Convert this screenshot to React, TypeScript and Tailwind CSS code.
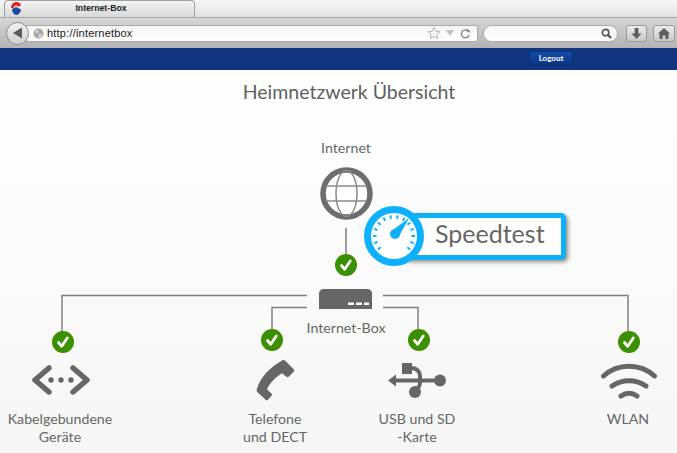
import React from 'react';

const font = { fontFamily: 'Lato, "Open Sans", sans-serif' };

const gaugeTicks = [-130, -110, -90, -70, -50, -30, -10, 10, 30, 50, 70, 90, 110, 130];

const Check = ({ className }: { className: string }) => (
  <svg className={`absolute ${className}`} width="24" height="24" viewBox="0 0 24 24">
    <circle cx="12" cy="12" r="11" fill="#3b9000" />
    <path d="M7.500 12.500l3.200 3.800L16.300 8" fill="none" stroke="#fff" strokeWidth="2.800" strokeLinecap="round" strokeLinejoin="round" />
  </svg>
);

const Label = ({ className, children }: { className: string; children: React.ReactNode }) => (
  <div className={`absolute text-center text-[14.2px] leading-[18px] text-[#666] ${className}`}>{children}</div>
);

const App = () => {
  return (
    <div className="w-[677px] h-[453px] flex flex-col overflow-hidden bg-white" style={font}>
      {/* browser tab strip */}
      <div className="h-[18px] flex items-end pl-[4px] bg-gradient-to-b from-[#f6f6f6] to-[#e2e2e2] border-b border-[#a8a8a8]">
        <div className="relative w-[191px] h-[17px] flex items-center justify-center rounded-t-[4px] border border-b-0 border-[#a0a0a0] bg-gradient-to-b from-[#f4f4f4] to-[#d9d9d9]">
          <svg className="absolute left-[4px] top-[1px]" width="14" height="14" viewBox="0 0 14 14">
            <path d="M2 6C2 2 5 0 7.500 0c2 0 4 1 4.500 3L9.500 5C8 3 5 3 4.500 6z" fill="#e2231a" />
            <path d="M3 7l4-2 5 2.500c0 3-3 5.500-4.500 5.500C5 13 3 10 3 7z" fill="#1c4ba0" />
          </svg>
          <span className="pl-[3px] text-[8.7px] font-bold text-[#222] font-['Liberation_Sans',sans-serif]">Internet-Box</span>
        </div>
      </div>

      {/* browser toolbar */}
      <div className="h-[30px] flex items-center pl-[6px] pr-[2px] bg-gradient-to-b from-[#d6d6d6] to-[#b3b3b3]">
        <div className="relative z-10 w-[23px] h-[23px] rounded-full border border-[#8f8f8f] bg-gradient-to-b from-[#f2f2f2] to-[#cfcfcf] flex items-center justify-center">
          <svg width="11" height="12" viewBox="0 0 11 12"><path d="M1 6l9-5.500v11z" fill="#5c5c5c" /></svg>
        </div>
        <div className="-ml-[3px] w-[452px] h-[17px] flex items-center bg-gradient-to-b from-[#f4f4f4] to-white border border-[#a9a9a9] rounded-r-[2px] pl-[6px] pr-[6px]">
          <svg width="11" height="11" viewBox="0 0 12 12">
            <circle cx="6" cy="6" r="5.500" fill="#a9a9a9" />
            <path d="M3 3c2-1 3 0 3 1S4 6 3 5zM7 6c2 0 3 1 2 3s-3 1-3 0z" fill="#dcdcdc" />
          </svg>
          <span className="ml-[3px] text-[11px] text-[#222] font-['Liberation_Sans',sans-serif] tracking-[0.2px]">http://internetbox</span>
          <div className="flex-1" />
          <svg width="14" height="14" viewBox="0 0 24 24" fill="#f6f6f6" stroke="#b4b4b4" strokeWidth="1.600">
            <path d="M12 2l3 7 7.500.6-5.700 4.900 1.800 7.400L12 18l-6.600 3.900 1.800-7.400L1.500 9.600 9 9z" />
          </svg>
          <svg className="ml-[5px]" width="8" height="6" viewBox="0 0 8 6"><path d="M0 0h8L4 6z" fill="#c2c2c2" /></svg>
          <svg className="ml-[6px]" width="11" height="11" viewBox="0 0 12 12" fill="none" stroke="#7a7a7a" strokeWidth="1.300">
            <path d="M10 7.500A4.300 4.300 0 1 1 8.500 3" />
            <path d="M8 0.500v4h3.500z" fill="#7a7a7a" stroke="none" />
          </svg>
        </div>
        <div className="ml-[5px] w-[135px] h-[17px] rounded-full flex items-center justify-end pr-[5px] bg-gradient-to-b from-[#f4f4f4] to-white border border-[#a9a9a9]">
          <svg width="11" height="11" viewBox="0 0 12 12" fill="none" stroke="#555" strokeWidth="1.800">
            <circle cx="5" cy="5" r="3.500" />
            <path d="M7.500 7.500L11 11" strokeWidth="2.400" />
          </svg>
        </div>
        <div className="ml-[8px] w-[21px] h-[17px] rounded-[3px] border border-[#9a9a9a] bg-gradient-to-b from-[#ececec] to-[#c8c8c8] flex items-center justify-center">
          <svg width="11" height="11" viewBox="0 0 12 12"><path d="M4 0h4v6h3.500L6 12 0.500 6H4z" fill="#5e5e5e" /></svg>
        </div>
        <div className="ml-[6px] w-[22px] h-[17px] rounded-[3px] border border-[#9a9a9a] bg-gradient-to-b from-[#ececec] to-[#c8c8c8] flex items-center justify-center">
          <svg width="12" height="11" viewBox="0 0 12 11"><path d="M6 0l6 5.500h-1.500V11H7.500V7.500h-3V11H1.500V5.500H0z" fill="#5e5e5e" /></svg>
        </div>
      </div>

      {/* site header */}
      <div className="h-[22px] flex items-start justify-end pt-[3px] pr-[104px] bg-[#11357f]">
        <button className="w-[44px] h-[15px] rounded-[1px] border border-[#0d2f72] bg-gradient-to-b from-[#0f4ea8] to-[#0b3480] text-[8px] font-bold text-white leading-[13px]">Logout</button>
      </div>

      {/* home network diagram */}
      <div className="relative flex-1 bg-gradient-to-b from-white to-[#f6f6f6]">
        <h1 className="pt-[10px] pl-[21px] text-center text-[19.5px] leading-[24px] text-[#5f5f5f]">Heimnetzwerk Übersicht</h1>

        <svg className="absolute left-0 top-0" width="677" height="383" fill="none" stroke="#808080" strokeWidth="1.500">
          <path d="M346 158v32" />
          <path d="M307 225.500H62V267" />
          <path d="M307 237.500H272V267" />
          <path d="M383 225.500H628V267" />
          <path d="M383 237.500H418V267" />
        </svg>

        <Label className="left-[296px] top-[69px] w-[100px]">Internet</Label>

        <svg className="absolute left-[320px] top-[97px]" width="53" height="53" viewBox="0 0 53 53" fill="none" stroke="#8a8a8a" strokeWidth="1.500">
          <circle cx="26.500" cy="26.500" r="23.500" fill="#fff" stroke="#6d6d6d" strokeWidth="5.500" />
          <ellipse cx="26.500" cy="26.500" rx="10.500" ry="23" />
          <path d="M6 19h41M6 34h41" />
        </svg>

        {/* speedtest callout */}
        <div className="absolute left-[404px] top-[143px] w-[162px] h-[47px] pl-[26px] pb-[6px] flex items-center rounded-[5px] border-[5px] border-[#0db1f5] bg-white shadow-[2px_2px_4px_rgba(0,0,0,0.45)] text-[25px] leading-none text-[#666]">
          Speedtest
        </div>
        <svg className="absolute left-[363px] top-[134px]" width="64" height="64" viewBox="0 0 64 64">
          <circle cx="31" cy="32" r="26.500" fill="#fff" stroke="#0db1ff" strokeWidth="7" />
          {gaugeTicks.map((angle) => (
            <path key={angle} d="M31 11v3.500" stroke="#0db1ff" strokeWidth="2" transform={`rotate(${angle} 31 32)`} />
          ))}
          <circle cx="32" cy="30" r="5" fill="#0db1ff" />
          <path d="M28.500 27L46 14 35 34z" fill="#0db1ff" />
        </svg>

        <Check className="left-[334px] top-[183px]" />

        {/* router */}
        <svg className="absolute left-[319px] top-[218px]" width="53" height="22" viewBox="0 0 53 22">
          <path d="M0 21V5a5 5 0 0 1 5-4h43a5 5 0 0 1 5 4v16z" fill="#666" />
          <path d="M29 14.500h6v2.500h-6zM37 14.500h6v2.500h-6zM45 14.500h5v2.500h-5z" fill="#fff" />
        </svg>
        <Label className="left-[286px] top-[249px] w-[120px]">Internet-Box</Label>

        <Check className="left-[51px] top-[260px]" />
        <Check className="left-[260px] top-[258px]" />
        <Check className="left-[407px] top-[258px]" />
        <Check className="left-[617px] top-[260px]" />

        {/* wired */}
        <svg className="absolute left-[31px] top-[295px]" width="60" height="30" viewBox="0 0 60 30" fill="#666">
          <path d="M18 3L4 15l14 12" fill="none" stroke="#666" strokeWidth="5.500" strokeLinecap="round" strokeLinejoin="round" />
          <path d="M42 3l14 12-14 12" fill="none" stroke="#666" strokeWidth="5.500" strokeLinecap="round" strokeLinejoin="round" />
          <circle cx="20" cy="15" r="2.700" />
          <circle cx="30" cy="15" r="2.700" />
          <circle cx="40" cy="15" r="2.700" />
        </svg>

        {/* phone */}
        <svg className="absolute left-[254px] top-[289px]" width="42" height="42" viewBox="0 0 42 42" fill="#666">
          <path d="M31 1.500l8.500 8.500c1 1 1 1.800.2 2.700l-4.700 4.800c-.8.8-1.700.8-2.500.2l-3.500-2.800c-.8-.6-1.600-.6-2.300 0C20 19.500 16 24 13.500 29c-.4.8-.3 1.600.4 2.200l3.500 3.300c.7.7.8 1.500.1 2.300l-3.300 3.700c-.8.9-1.600 1-2.500.2L3.500 33.200c-.9-.9-1.100-1.800-.7-3C7 17 16.500 8 28.500 1.200c1-.5 1.800-.4 2.500.3z" />
        </svg>

        {/* usb */}
        <svg className="absolute left-[388px] top-[292px]" width="60" height="40" viewBox="0 0 60 40" fill="none" stroke="#666" strokeWidth="4">
          <path d="M0 18.500L8 12.500V24.500z" fill="#666" stroke="none" />
          <path d="M6 18.500H50" />
          <circle cx="52" cy="18.500" r="6" fill="#666" stroke="none" />
          <path d="M14 1h10v11H14z" fill="#666" stroke="none" />
          <path d="M22 6h1c6 0 9 4 9 8v6c0 4-2 7-5 9" />
          <circle cx="27" cy="30" r="6" fill="#666" stroke="none" />
        </svg>

        {/* wlan */}
        <svg className="absolute left-[600px] top-[290px]" width="58" height="40" viewBox="0 0 58 40" fill="none" stroke="#666" strokeWidth="5" strokeLinecap="round">
          <path d="M3.500 16C18 3 40 3 54.500 16" />
          <path d="M12 26c10-7 24-7 34 0" />
          <path d="M21 36c5-3.500 11-3.500 16 0" />
        </svg>

        <Label className="left-[0px] top-[340px] w-[120px]">Kabelgebundene<br />Geräte</Label>
        <Label className="left-[215px] top-[340px] w-[120px]">Telefone<br />und DECT</Label>
        <Label className="left-[357px] top-[340px] w-[120px]">USB und SD<br />-Karte</Label>
        <Label className="left-[568px] top-[340px] w-[120px]">WLAN</Label>
      </div>
    </div>
  );
};

export default App;
